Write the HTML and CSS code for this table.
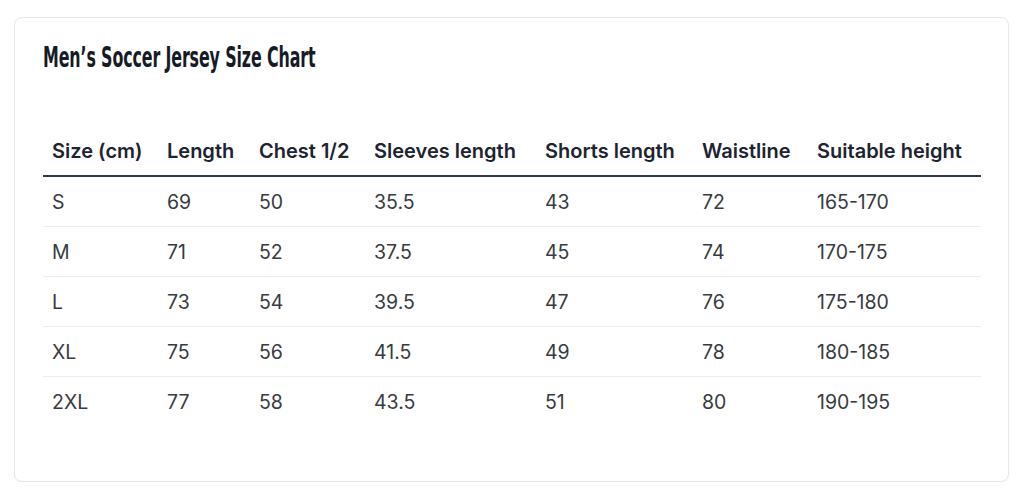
FILE: index.html
```html
<!DOCTYPE html>
<html>
<head>
<meta charset="utf-8">
<link rel="stylesheet" href="styles.css">
</head>
<body>
<div class="card">
  <h2 class="title"><span class="title-text">Men’s Soccer Jersey Size Chart</span></h2>
  <table class="chart">
    <colgroup>
      <col class="c1"><col class="c2"><col class="c3"><col class="c4"><col class="c5"><col class="c6"><col class="c7">
    </colgroup>
    <thead>
      <tr><th>Size (cm)</th><th>Length</th><th>Chest 1/2</th><th>Sleeves length</th><th>Shorts length</th><th>Waistline</th><th>Suitable height</th></tr>
    </thead>
    <tbody>
      <tr><td>S</td><td>69</td><td>50</td><td>35.5</td><td>43</td><td>72</td><td>165-170</td></tr>
      <tr><td>M</td><td>71</td><td>52</td><td>37.5</td><td>45</td><td>74</td><td>170-175</td></tr>
      <tr><td>L</td><td>73</td><td>54</td><td>39.5</td><td>47</td><td>76</td><td>175-180</td></tr>
      <tr><td>XL</td><td>75</td><td>56</td><td>41.5</td><td>49</td><td>78</td><td>180-185</td></tr>
      <tr><td>2XL</td><td>77</td><td>58</td><td>43.5</td><td>51</td><td>80</td><td>190-195</td></tr>
    </tbody>
  </table>
</div>
</body>
</html>
```
FILE: styles.css
```css
html, body { margin: 0; padding: 0; background: #ffffff; }
body { font-family: Inter, "Noto Sans", sans-serif; }
.card {
  box-sizing: border-box;
  margin: 17px 0 0 14px;
  width: 995px;
  height: 465px;
  border: 1px solid #e6e7e9;
  border-radius: 8px;
  box-shadow: 0 1px 2px rgba(0,0,0,0.04);
  padding: 26px 27px 0 28px;
}
.title {
  margin: 0 0 55px 0;
  font-family: "DejaVu Sans Condensed", "DejaVu Sans", sans-serif;
  font-stretch: condensed;
  font-weight: 700;
  font-size: 28px;
  line-height: 28px;
  height: 28px;
  color: #161b26;
  white-space: nowrap;
}
.title-text {
  display: inline-block;
  transform: scaleX(0.63);
  transform-origin: left center;
  letter-spacing: -0.2px;
}
.chart {
  width: 938px;
  border-collapse: collapse;
  table-layout: fixed;
}
.c1 { width: 115px; }
.c2 { width: 92px; }
.c3 { width: 115px; }
.c4 { width: 171px; }
.c5 { width: 157px; }
.c6 { width: 115px; }
.c7 { width: 173px; }
.chart th {
  text-align: left;
  font-weight: 600;
  font-size: 20px;
  color: #1d2330;
  height: 48px;
  padding: 0 0 0 9px;
  border-bottom: 2px solid #2f3a4b;
  white-space: nowrap;
}
.chart td {
  font-size: 19.5px;
  font-weight: 400;
  color: #383b41;
  height: 49px;
  padding: 0 0 0 9px;
  border-bottom: 1px solid #ececee;
}
.chart tbody tr:last-child td { border-bottom: 0; }
```
